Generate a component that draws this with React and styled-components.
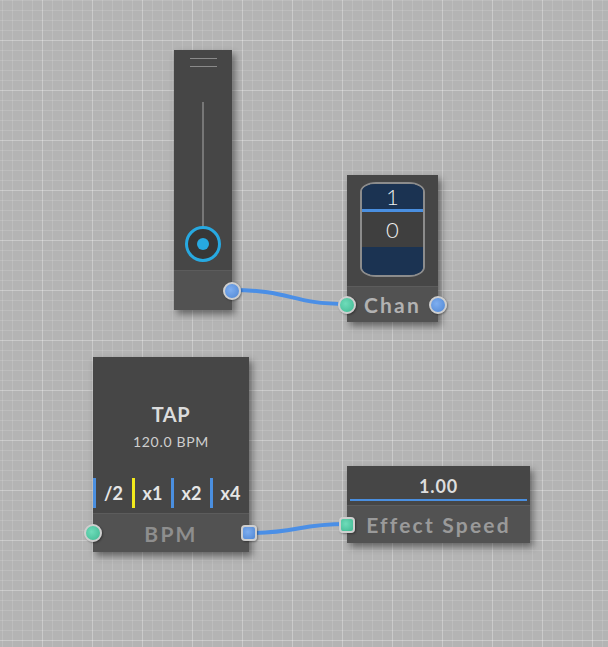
import React from "react";
import styled, { createGlobalStyle } from "styled-components";

const GlobalStyle = createGlobalStyle`
  html, body {
    margin: 0;
    padding: 0;
    background: #b4b4b4;
  }
  * { box-sizing: border-box; }
`;

const Canvas = styled.div`
  position: relative;
  width: 608px;
  height: 647px;
  overflow: hidden;
  font-family: Lato, "Open Sans", sans-serif;
  background-color: #b4b4b4;
  background-image:
    linear-gradient(to right, rgba(255, 255, 255, 0.2) 1px, transparent 1px),
    linear-gradient(to bottom, rgba(255, 255, 255, 0.2) 1px, transparent 1px),
    linear-gradient(to right, rgba(255, 255, 255, 0.12) 1px, transparent 1px),
    linear-gradient(to bottom, rgba(255, 255, 255, 0.12) 1px, transparent 1px);
  background-size: 50px 50px, 50px 50px, 10px 10px, 10px 10px;
  background-position: 42px 40px, 42px 40px, 2px 0, 2px 0;
`;

const Wires = styled.svg`
  position: absolute;
  inset: 0;
  width: 608px;
  height: 647px;
  pointer-events: none;
`;

const Node = styled.div`
  position: absolute;
  left: ${(p) => p.$x}px;
  top: ${(p) => p.$y}px;
  width: ${(p) => p.$w}px;
  display: flex;
  flex-direction: column;
  background: #464646;
  box-shadow: 3px 4px 7px rgba(0, 0, 0, 0.45);
`;

const Body = styled.div`
  height: ${(p) => p.$h}px;
  display: flex;
  flex-direction: column;
  align-items: center;
`;

const Footer = styled.div`
  position: relative;
  height: ${(p) => p.$h}px;
  background: #525252;
  border-top: 1px solid #5c5c5c;
  display: flex;
  align-items: center;
  justify-content: center;
  color: ${(p) => p.$color || "#9a9a9a"};
  font-size: 21px;
  font-weight: 700;
  letter-spacing: 2.2px;
`;

const Port = styled.span`
  position: absolute;
  top: 50%;
  ${(p) => (p.$side === "left" ? "left: 0;" : "right: 0;")}
  transform: translate(${(p) => (p.$side === "left" ? "-50%" : "50%")}, -50%);
  width: ${(p) => (p.$square ? 16 : 18)}px;
  height: ${(p) => (p.$square ? 16 : 18)}px;
  border-radius: ${(p) => (p.$square ? "4px" : "50%")};
  border: 2px solid #cfcfcf;
  background: ${(p) =>
    p.$kind === "in"
      ? "radial-gradient(circle at 40% 40%, #6fdcba, #3fb892)"
      : "radial-gradient(circle at 40% 40%, #7eaef0, #4f86d3)"};
  box-shadow: 1px 1px 2px rgba(0, 0, 0, 0.35);
`;

/* fader */
const Grip = styled.div`
  margin-top: 8px;
  width: 27px;
  height: 9px;
  border-top: 1px solid #8a8a8a;
  border-bottom: 1px solid #8a8a8a;
  margin-left: 1px;
`;

const Track = styled.div`
  margin-top: 35px;
  width: 2px;
  flex: 1;
  background: #777;
`;

const Knob = styled.div`
  width: 36px;
  height: 36px;
  margin-bottom: 8px;
  border-radius: 50%;
  border: 3px solid #27a9e1;
  background: #373737;
  display: flex;
  align-items: center;
  justify-content: center;
  &::after {
    content: "";
    width: 12px;
    height: 12px;
    border-radius: 50%;
    background: #27a9e1;
  }
`;

/* drum selector */
const Drum = styled.div`
  margin-top: 7px;
  width: 65px;
  height: 95px;
  border: 2px solid #8c8c8c;
  border-radius: 16px / 10px;
  overflow: hidden;
  display: flex;
  flex-direction: column;
  background: #1b3352;
`;

const DrumCell = styled.div`
  height: ${(p) => p.$h}px;
  display: flex;
  align-items: center;
  justify-content: center;
  background: ${(p) => p.$bg || "#1b3352"};
  border-bottom: ${(p) => (p.$line ? "3px solid #4a8fe0" : "none")};
  color: #f0f0f0;
  font-size: 22px;
  font-weight: 300;
`;

/* tap */
const Title = styled.div`
  margin-top: 46px;
  font-size: 20px;
  font-weight: 700;
  line-height: 23px;
  color: #dcdcdc;
  letter-spacing: 0.6px;
`;

const Sub = styled.div`
  margin-top: 7px;
  font-size: 14px;
  line-height: 17px;
  color: #cfcfcf;
  letter-spacing: 0.7px;
`;

const Multipliers = styled.div`
  margin-top: auto;
  margin-bottom: 5px;
  width: 100%;
  display: grid;
  grid-template-columns: repeat(4, 1fr);
  height: 30px;
`;

const Mult = styled.div`
  border-left: 3px solid ${(p) => p.$color};
  display: flex;
  align-items: center;
  justify-content: center;
  color: #e6e6e6;
  font-size: 18px;
  font-weight: 700;
  padding-right: 1px;
`;

/* value */
const Value = styled.div`
  width: 100%;
  height: 39px;
  display: flex;
  flex-direction: column;
  align-items: center;
  justify-content: flex-end;
  padding: 0 3px 4px;
  color: #dedede;
  font-size: 18px;
  font-weight: 700;
  letter-spacing: 0.8px;
`;

const ValueBar = styled.div`
  margin-top: 2px;
  width: 100%;
  height: 2px;
  background: #4a8fe0;
`;

export default function App() {
  return (
    <>
      <GlobalStyle />
      <Canvas>
        <Wires viewBox="0 0 608 647">
          <path
            d="M232 290 C 292 290, 290 304, 347 304"
            fill="none"
            stroke="#4b8fe6"
            strokeWidth="4"
          />
          <path
            d="M249 533 C 300 533, 296 524, 347 524"
            fill="none"
            stroke="#4b8fe6"
            strokeWidth="4"
          />
        </Wires>

        <Node $x={174} $y={50} $w={58}>
          <Body $h={220}>
            <Grip />
            <Track />
            <Knob />
          </Body>
          <Footer $h={40}>
            <Port $side="right" $kind="out" />
          </Footer>
        </Node>

        <Node $x={347} $y={175} $w={91}>
          <Body $h={111}>
            <Drum>
              <DrumCell $h={28} $line>1</DrumCell>
              <DrumCell $h={35} $bg="#3f3f3f">0</DrumCell>
              <DrumCell $h={28} />
            </Drum>
          </Body>
          <Footer $h={36} $color="#b2b2b2">
            <Port $side="left" $kind="in" />
            Chan
            <Port $side="right" $kind="out" />
          </Footer>
        </Node>

        <Node $x={93} $y={357} $w={156}>
          <Body $h={156}>
            <Title>TAP</Title>
            <Sub>120.0 BPM</Sub>
            <Multipliers>
              <Mult $color="#4a8fe0">/2</Mult>
              <Mult $color="#f2ea1c">x1</Mult>
              <Mult $color="#4a8fe0">x2</Mult>
              <Mult $color="#4a8fe0">x4</Mult>
            </Multipliers>
          </Body>
          <Footer $h={39} $color="#8e8e8e">
            <Port $side="left" $kind="in" />
            BPM
            <Port $side="right" $kind="out" $square />
          </Footer>
        </Node>

        <Node $x={347} $y={466} $w={183}>
          <Body $h={39}>
            <Value>
              1.00
              <ValueBar />
            </Value>
          </Body>
          <Footer $h={38} $color="#9a9a9a">
            <Port $side="left" $kind="in" $square />
            Effect Speed
          </Footer>
        </Node>
      </Canvas>
    </>
  );
}
